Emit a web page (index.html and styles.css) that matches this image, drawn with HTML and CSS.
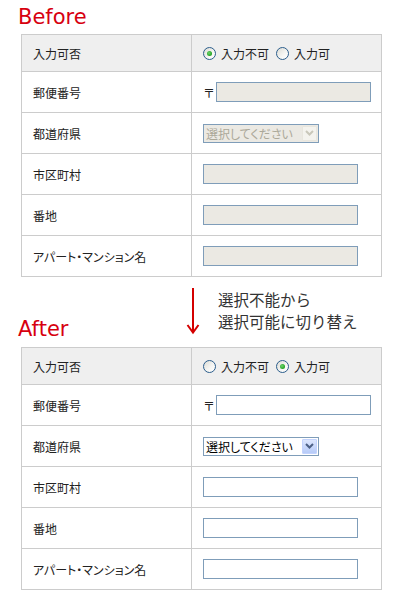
FILE: index.html
```html
<!DOCTYPE html>
<html lang="ja">
<head>
<meta charset="utf-8">
<title>Before / After</title>
<link rel="stylesheet" href="styles.css">
</head>
<body>
<div class="page">
  <h2 class="title title-before">Before</h2>
  <table class="form">
    <tr class="head">
      <th>入力可否</th>
      <td><div class="cell"><label class="radio"><span class="dot checked"></span>入力不可</label><label class="radio"><span class="dot"></span>入力可</label></div></td>
    </tr>
    <tr>
      <th>郵便番号</th>
      <td><div class="cell"><span class="zip">〒</span><input class="field" type="text" disabled></div></td>
    </tr>
    <tr>
      <th>都道府県</th>
      <td><div class="cell"><span class="select is-disabled"><span class="select-text">選択してください</span><span class="select-btn"><svg width="9" height="6" viewBox="0 0 9 6"><path d="M1 1 L4.5 4.5 L8 1" fill="none" stroke="currentColor" stroke-width="2"/></svg></span></span></div></td>
    </tr>
    <tr>
      <th>市区町村</th>
      <td><div class="cell"><input class="field wide" type="text" disabled></div></td>
    </tr>
    <tr>
      <th>番地</th>
      <td><div class="cell"><input class="field wide" type="text" disabled></div></td>
    </tr>
    <tr>
      <th><span class="kana">アパート・マンション名</span></th>
      <td><div class="cell"><input class="field wide" type="text" disabled></div></td>
    </tr>
  </table>

  <div class="between">
    <h2 class="title title-after">After</h2>
    <svg class="arrow" width="14" height="48" viewBox="0 0 14 48"><path d="M7 1 V46" stroke="#d40000" stroke-width="2" fill="none"/><path d="M1.5 38 L7 45.5 L12.5 38" stroke="#d40000" stroke-width="2" fill="none"/></svg>
    <p class="note">選択不能から<br>選択可能に切り替え</p>
  </div>

  <table class="form">
    <tr class="head">
      <th>入力可否</th>
      <td><div class="cell"><label class="radio"><span class="dot"></span>入力不可</label><label class="radio"><span class="dot checked"></span>入力可</label></div></td>
    </tr>
    <tr>
      <th>郵便番号</th>
      <td><div class="cell"><span class="zip">〒</span><input class="field on" type="text"></div></td>
    </tr>
    <tr>
      <th>都道府県</th>
      <td><div class="cell"><span class="select"><span class="select-text">選択してください</span><span class="select-btn"><svg width="9" height="6" viewBox="0 0 9 6"><path d="M1 1 L4.5 4.5 L8 1" fill="none" stroke="currentColor" stroke-width="2"/></svg></span></span></div></td>
    </tr>
    <tr>
      <th>市区町村</th>
      <td><div class="cell"><input class="field wide on" type="text"></div></td>
    </tr>
    <tr>
      <th>番地</th>
      <td><div class="cell"><input class="field wide on" type="text"></div></td>
    </tr>
    <tr>
      <th><span class="kana">アパート・マンション名</span></th>
      <td><div class="cell"><input class="field wide on" type="text"></div></td>
    </tr>
  </table>
</div>
</body>
</html>
```

FILE: styles.css
```css
html, body {
  margin: 0;
  padding: 0;
  background: #ffffff;
}

.page {
  width: 400px;
  font-family: "Noto Sans CJK JP", "DejaVu Sans", sans-serif;
  font-size: 12px;
  color: #222222;
}

.title {
  margin: 0;
  font-family: "DejaVu Sans", Verdana, sans-serif;
  font-size: 21px;
  font-weight: normal;
  line-height: 24px;
  color: #d7000f;
}

.title-before {
  padding: 5px 0 0 18px;
  height: 24px;
  margin-bottom: 5px;
}

.form {
  border-collapse: collapse;
  margin-left: 21px;
  width: 361px;
}

.form th,
.form td {
  border: 1px solid #cccccc;
  height: 41px;
  padding: 0 0 0 11px;
  vertical-align: middle;
  box-sizing: border-box;
}

.form th {
  width: 170px;
  text-align: left;
  font-weight: normal;
  color: #222222;
}

.form .head th,
.form .head td {
  height: 37px;
  background: #efefef;
}

.cell {
  display: flex;
  align-items: center;
}

.kana {
  font-feature-settings: "palt";
}

.radio {
  display: flex;
  align-items: center;
}

.radio + .radio {
  margin-left: 7px;
}

.dot {
  position: relative;
  width: 13px;
  height: 13px;
  box-sizing: border-box;
  border-radius: 50%;
  border: 1px solid #2b5d8c;
  background: linear-gradient(135deg, #dcdcd5 0%, #f6f6f4 60%, #ffffff 100%);
  margin-right: 5px;
}

.dot.checked::after {
  content: "";
  position: absolute;
  left: 3px;
  top: 3px;
  width: 5px;
  height: 5px;
  border-radius: 50%;
  background: radial-gradient(circle at 40% 40%, #6fd46f 0%, #21a121 70%, #1a7f1a 100%);
}

.zip {
  width: 13px;
  font-size: 12px;
}

.field {
  width: 155px;
  height: 20px;
  box-sizing: border-box;
  border: 1px solid #7f9db9;
  background: #ebe9e3;
  padding: 0 2px;
  margin: 0;
  font: inherit;
}

.field.on {
  background: #ffffff;
}

.select {
  display: flex;
  align-items: stretch;
  width: 116px;
  height: 19px;
  box-sizing: border-box;
  border: 1px solid #7f9db9;
  background: #ffffff;
}

.select-text {
  flex: 1;
  padding-left: 2px;
  line-height: 17px;
  font-size: 12px;
  color: #000000;
  font-feature-settings: "palt";
  overflow: hidden;
  white-space: nowrap;
}

.select-btn {
  width: 15px;
  margin: 1px;
  box-sizing: border-box;
  display: flex;
  align-items: center;
  justify-content: center;
  border: 1px solid #c3d3fd;
  border-radius: 1px;
  background: linear-gradient(#dce6fd, #b7cbf8);
  color: #4d6185;
}

.select.is-disabled {
  background: #ebe9e3;
}

.select.is-disabled .select-text {
  color: #aca899;
}

.select.is-disabled .select-btn {
  border-color: #e8e6de;
  background: #f4f3ee;
  color: #c9c7ba;
}

.between {
  display: flex;
  align-items: flex-start;
  height: 70px;
  padding-left: 18px;
}

.title-after {
  width: 168px;
  align-self: flex-end;
  margin-bottom: 6px;
}

.arrow {
  display: block;
  margin-top: 10px;
}

.note {
  margin: 11px 0 0 18px;
  font-size: 15.5px;
  line-height: 22px;
  color: #333333;
}
```
